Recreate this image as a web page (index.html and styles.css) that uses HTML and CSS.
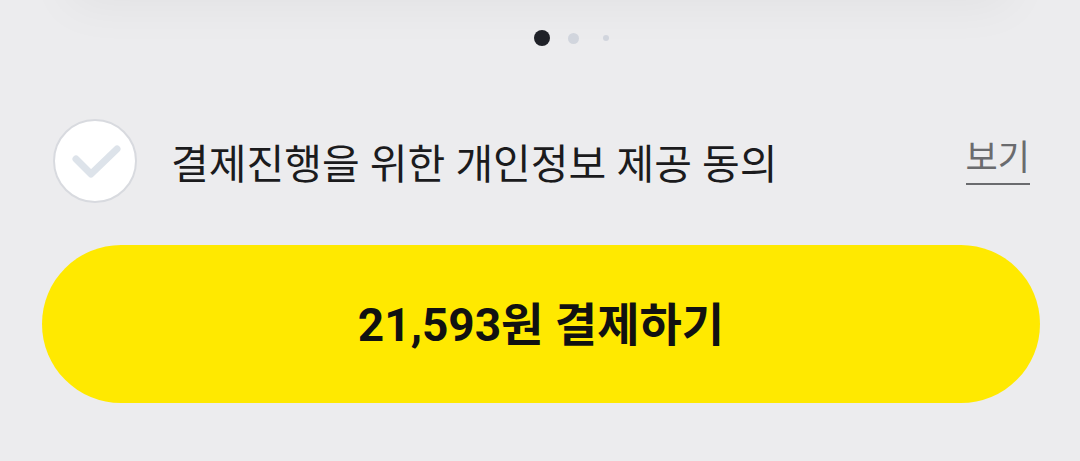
FILE: index.html
```html
<!DOCTYPE html>
<html lang="ko">
<head>
<meta charset="utf-8">
<link rel="stylesheet" href="styles.css">
</head>
<body>
<div class="page">
  <div class="top-card"></div>
  <div class="dots">
    <span class="dot dot-active"></span>
    <span class="dot dot-mid"></span>
    <span class="dot dot-small"></span>
  </div>
  <div class="consent">
    <span class="check">
      <svg width="84" height="84" viewBox="0 0 84 84">
        <circle cx="42" cy="42" r="41" fill="#ffffff" stroke="#d8dadf" stroke-width="2"/>
        <path d="M23 40 L38 55 L64 30" fill="none" stroke="#dde3ea" stroke-width="7" stroke-linecap="round" stroke-linejoin="round"/>
      </svg>
    </span>
    <span class="consent-text">결제진행을 위한 개인정보 제공 동의</span>
    <span class="view">보기</span>
  </div>
  <div class="pay">21,593원 결제하기</div>
</div>
</body>
</html>
```
FILE: styles.css
```css
html, body {
  margin: 0;
  padding: 0;
}
body {
  background: #ececee;
  font-family: Roboto, "Noto Sans CJK KR", sans-serif;
  width: 1080px;
  height: 461px;
  overflow: hidden;
}
.page {
  display: flex;
  flex-direction: column;
}
.top-card {
  height: 60px;
  margin: -60px 70px 0;
  background: #ececee;
  box-shadow: 0 4px 50px rgba(0, 0, 0, 0.05);
}
.dots {
  display: flex;
  justify-content: center;
  align-items: center;
  height: 16px;
  margin-top: 30px;
}
.dot {
  display: block;
  border-radius: 50%;
}
.dot-active {
  width: 16px;
  height: 16px;
  background: #1f2128;
  margin-left: 62px;
}
.dot-mid {
  width: 11px;
  height: 11px;
  background: #d1d5dd;
  margin-left: 18px;
}
.dot-small {
  width: 6px;
  height: 6px;
  background: #d1d5dd;
  margin-left: 24px;
}
.consent {
  display: flex;
  align-items: center;
  margin-top: 73px;
  padding: 0 50px 0 53px;
  height: 84px;
}
.check {
  display: block;
  width: 84px;
  height: 84px;
}
.check svg {
  display: block;
}
.consent-text {
  margin-left: 34px;
  font-size: 41px;
  color: #1b1b1d;
  flex: 1;
}
.view {
  font-size: 35px;
  color: #6a6b6e;
  border-bottom: 2px solid #6a6b6e;
  line-height: 44px;
  padding-bottom: 2px;
}
.pay {
  margin: 42px 40px 0 42px;
  height: 158px;
  border-radius: 79px;
  background: #ffe900;
  display: flex;
  align-items: center;
  justify-content: center;
  font-size: 46px;
  font-weight: 700;
  color: #111111;
  padding-bottom: 6px;
  box-sizing: border-box;
}
```
